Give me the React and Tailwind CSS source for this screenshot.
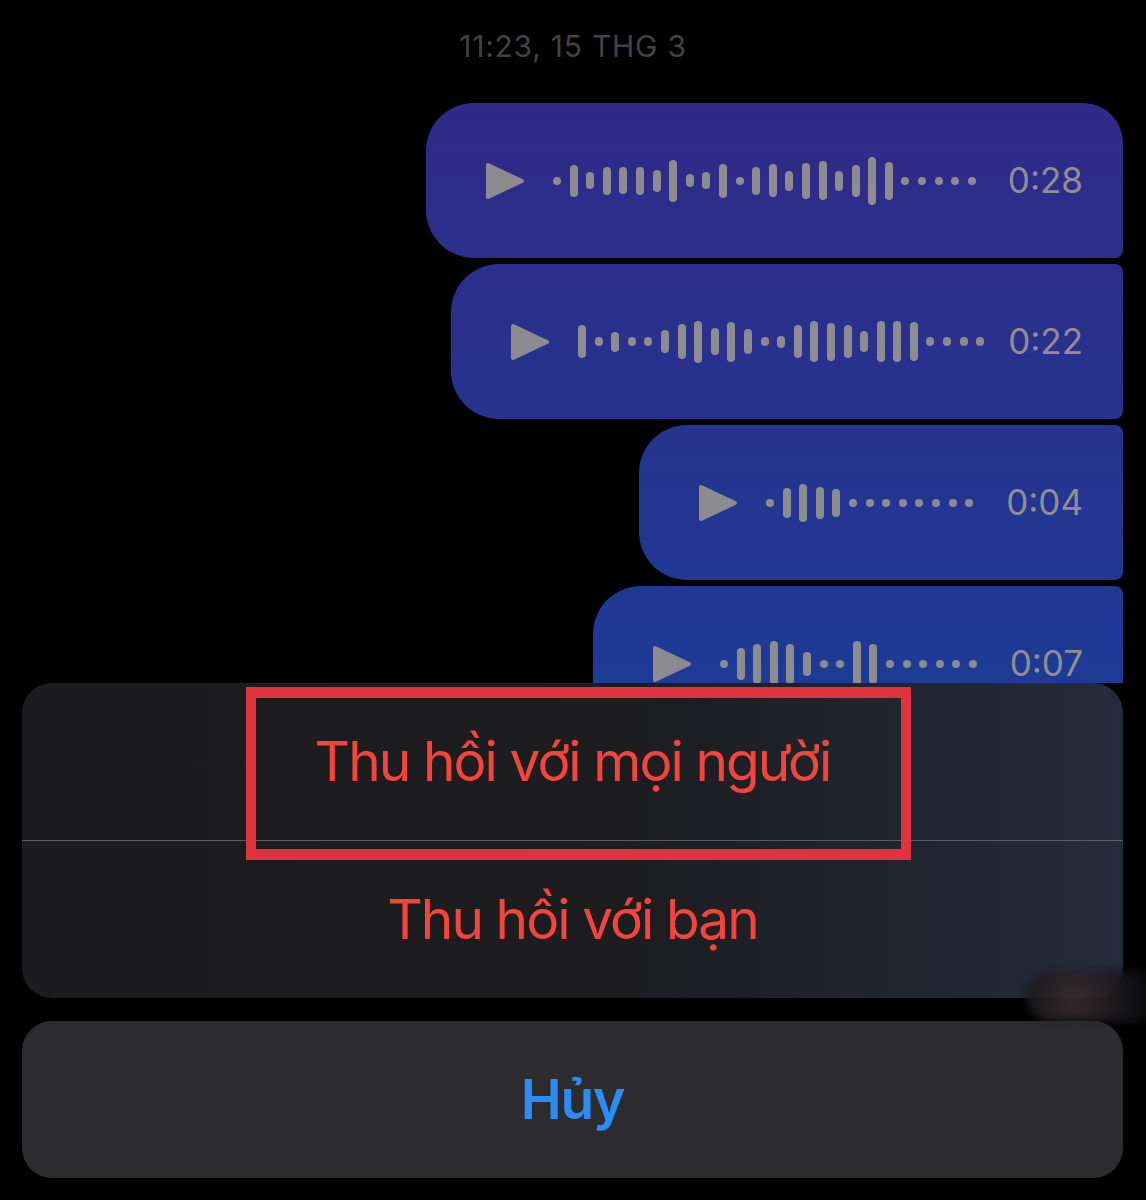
import React from 'react'

const font = { fontFamily: 'Inter, "Noto Sans", sans-serif' }

const messages = [
  {
    time: '0:28',
    width: 'w-[697px]',
    shape: 'rounded-tl-[48px] rounded-bl-[48px] rounded-tr-[40px] rounded-br-[8px]',
    bars: [8, 32, 17, 28, 27, 28, 22, 42, 13, 17, 34, 8, 28, 33, 20, 36, 39, 20, 32, 48, 38, 8, 8, 8, 8, 8]
  },
  {
    time: '0:22',
    width: 'w-[672px]',
    shape: 'rounded-tl-[48px] rounded-bl-[48px] rounded-tr-[8px] rounded-br-[8px]',
    bars: [33, 9, 20, 9, 9, 23, 35, 42, 27, 40, 25, 9, 12, 33, 41, 38, 33, 21, 41, 41, 39, 9, 9, 9, 9]
  },
  {
    time: '0:04',
    width: 'w-[484px]',
    shape: 'rounded-tl-[48px] rounded-bl-[48px] rounded-tr-[8px] rounded-br-[8px]',
    bars: [8, 30, 38, 32, 28, 8, 8, 8, 8, 8, 8, 8, 8]
  },
  {
    time: '0:07',
    width: 'w-[530px]',
    shape: 'rounded-tl-[48px] rounded-bl-[48px] rounded-tr-[8px] rounded-br-[8px]',
    bars: [8, 32, 40, 45, 40, 24, 8, 8, 45, 40, 8, 8, 8, 8, 8, 8]
  }
]

function PlayIcon() {
  return (
    <svg width="40" height="40" viewBox="0 0 40 40" className="shrink-0">
      <path d="M3 4 L37 20 L3 36 Z" fill="#8c8c90" stroke="#8c8c90" strokeWidth="4" strokeLinejoin="round" />
    </svg>
  )
}

function Waveform({ bars }) {
  return (
    <div className="ml-[28px] flex items-center gap-[8.6px]">
      {bars.map((h, i) => (
        <span key={i} className="block w-[8px] shrink-0 rounded-full bg-[#8c8c90]" style={{ height: h }} />
      ))}
    </div>
  )
}

function VoiceBubble({ msg }) {
  return (
    <div
      className={`${msg.width} ${msg.shape} h-[155px] shrink-0 flex items-center pl-[59px] pr-[40px] bg-fixed bg-[linear-gradient(180deg,#312a87_100px,#1d3b95_690px)]`}
    >
      <PlayIcon />
      <Waveform bars={msg.bars} />
      <span className="ml-auto text-[35px] leading-none text-[#8e8e93]">{msg.time}</span>
    </div>
  )
}

export default function App() {
  return (
    <div className="relative w-[1146px] h-[1200px] bg-black flex flex-col overflow-hidden" style={font}>
      <div className="h-[103px] shrink-0 pt-[28px] text-center">
        <span className="text-[30px] leading-[36px] tracking-[0.025em] text-[#424245]">11:23, 15 THG 3</span>
      </div>

      <div className="h-[580px] shrink-0 overflow-hidden flex flex-col items-end gap-[6px] pr-[23px]">
        {messages.map((m) => (
          <VoiceBubble key={m.time} msg={m} />
        ))}
      </div>

      <div className="flex flex-col px-[22px] pr-[23px]">
        <div className="h-[315px] rounded-[30px] overflow-hidden flex flex-col bg-[linear-gradient(90deg,#1c1c1e_0%,#1d1d20_55%,#242b3c_100%)]">
          <button className="h-[157px] flex items-center justify-center text-[55px] tracking-[-0.035em] text-[#f5453b]">
            Thu hồi với mọi người
          </button>
          <div className="h-px bg-[#5c5c60]" />
          <button className="h-[157px] flex items-center justify-center text-[55px] tracking-[-0.035em] text-[#f5453b]">
            Thu hồi với bạn
          </button>
        </div>
        <button className="mt-[23px] h-[157px] rounded-[30px] bg-[#2c2c2e] flex items-center justify-center text-[55px] font-semibold tracking-[-0.02em] text-[#2b8cf8]">
          Hủy
        </button>
      </div>

      <div className="absolute left-[1026px] top-[970px] w-[140px] h-[52px] rounded-full bg-[radial-gradient(circle_at_35%_60%,#3a2e2f,#141418_60%,#000_100%)] blur-[5px] opacity-90" />

      <div className="absolute left-[246px] top-[687px] w-[665px] h-[173px] border-x-[10px] border-y-[11px] border-[#e0333f]" />
    </div>
  )
}
